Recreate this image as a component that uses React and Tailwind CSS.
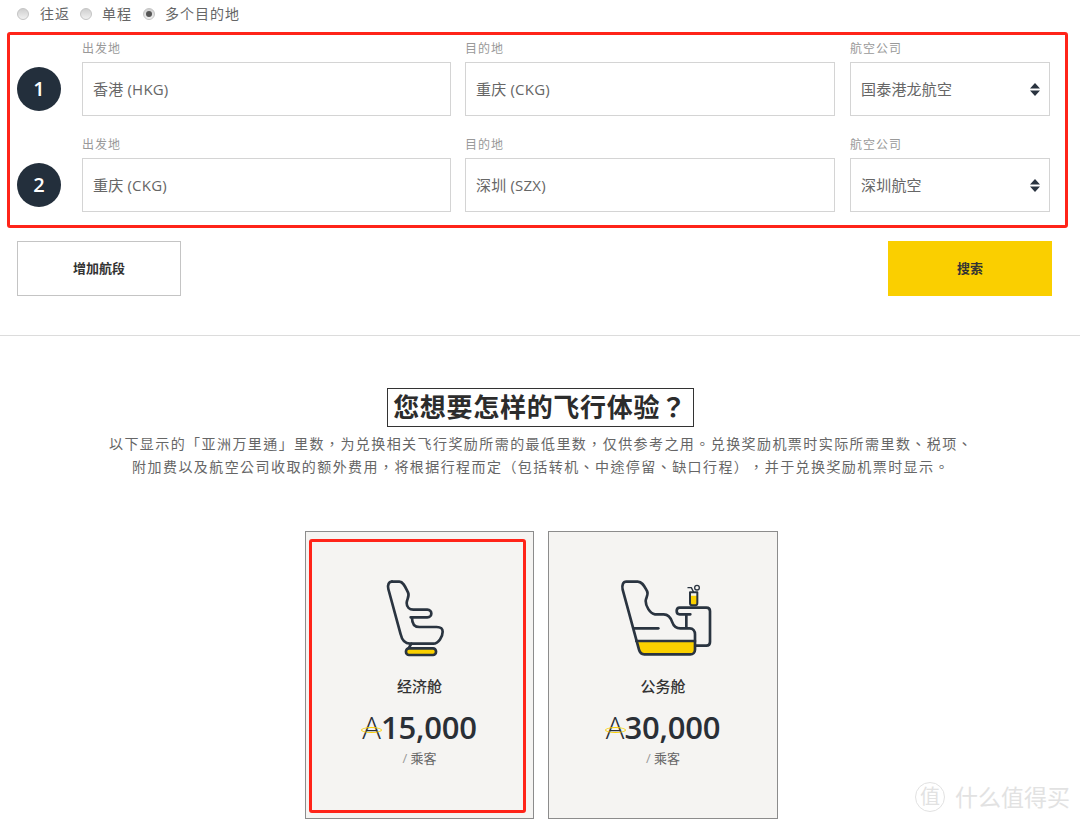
const FONT = "font-['Open_Sans','Noto_Sans_CJK_SC',sans-serif]";
const PUNCT_FONT = "font-['Open_Sans','Noto_Sans_CJK_TC',sans-serif]";

function Radio({ checked }) {
  return (
    <span className="flex h-3 w-3 items-center justify-center rounded-full border border-[#c4c4c4] bg-gradient-to-b from-[#cfcfcf] to-[#f1f1f1]">
      {checked && <span className="h-[6px] w-[6px] rounded-full bg-[#555]" />}
    </span>
  );
}

function UpDown() {
  return (
    <svg
      width="10"
      height="13"
      viewBox="0 0 10 13"
      className="pointer-events-none absolute right-[10px] top-[21px] text-[#2a3440]"
    >
      <path d="M5 0 L10 5.5 H0 Z M0 7.5 H10 L5 13 Z" fill="currentColor" />
    </svg>
  );
}

function Field({ label, value, className }) {
  return (
    <div className={className}>
      <div className="h-[22px] text-[12px] leading-[17px] tracking-[1px] text-[#999]">{label}</div>
      <input
        readOnly
        value={value}
        className="h-[54px] w-full border border-[#d4d4d4] bg-white px-[10px] pb-[2px] text-[15px] tracking-[0.2px] text-[#666] outline-none"
      />
    </div>
  );
}

function Airline({ value }) {
  return (
    <div className="w-[200px]">
      <div className="h-[22px] text-[12px] leading-[17px] tracking-[1px] text-[#999]">航空公司</div>
      <div className="relative">
        <select
          defaultValue={value}
          className="h-[54px] w-full appearance-none rounded-none border border-[#d4d4d4] bg-white px-[10px] text-[15px] tracking-[0.2px] text-[#666] outline-none"
        >
          <option>{value}</option>
        </select>
        <UpDown />
      </div>
    </div>
  );
}

function Segment({ num, from, to, airline }) {
  return (
    <div className="flex items-end">
      <div className="mb-[5px] mr-[21px] flex h-[44px] w-[44px] items-center justify-center rounded-full bg-[#232f3c] text-[20px] font-semibold text-white">
        {num}
      </div>
      <Field label="出发地" value={from} className="w-[369px]" />
      <Field label="目的地" value={to} className="ml-[14px] w-[370px]" />
      <div className="ml-[15px]">
        <Airline value={airline} />
      </div>
    </div>
  );
}

function EconomySeat() {
  return (
    <svg width="72" height="85" viewBox="0 0 216 255" className="mr-[7px]" fill="none" stroke="#2a3440" strokeWidth="8" strokeLinecap="round" strokeLinejoin="round">
      <path d="M36 20 H58 C70 20 76 36 84 52 C90 64 80 72 80 84 C80 96 88 104 100 104 H142 C158 104 158 127 142 127 H92" />
      <path d="M36 20 C26 20 22 30 25 42 L62 178 C66 196 74 206 90 206 H160 C176 206 188 184 188 170 C188 160 180 156 170 156 H118 C104 156 96 146 96 128" />
      <path d="M94 206 C90 212 88 216 86 220" />
      <rect x="78" y="220" width="90" height="20" rx="9" fill="#fad000" />
    </svg>
  );
}

function BusinessSeat() {
  return (
    <svg width="102" height="85" viewBox="0 0 306 255" className="ml-[6px]" fill="none" stroke="#2a3440" strokeWidth="8" strokeLinecap="round" strokeLinejoin="round">
      <path d="M66 198 H240 V224 C240 232 234 238 226 238 H88 C78 238 74 232 72 224 Z" fill="#fad000" stroke="none" />
      <path d="M34 20 H68 C82 20 88 34 96 48 C102 58 92 68 92 78 C92 92 104 116 120 118 H146 C162 118 168 130 172 142 C176 154 184 160 196 160 H224 C234 160 240 168 240 178 V224 C240 232 234 238 226 238 H88 C78 238 74 232 72 224 L23 44 C20 30 24 20 34 20 Z" />
      <path d="M58 160 H130" />
      <path d="M64 198 H240" />
      <path d="M226 118 H194 C182 118 182 98 194 98 H274 C281 98 285 102 285 109 V201 C285 208 281 212 274 212 H242" />
      <path d="M214 120 V158" />
      <path d="M225 62 H247 V84 C247 88 245 91 241 91 H231 C227 91 225 88 225 84 Z" fill="#fad000" stroke="none" />
      <path d="M225 52 H247 V84 C247 88 245 91 241 91 H231 C227 91 225 88 225 84 Z" strokeWidth="6" />
      <path d="M235 50 L229 38 H219" strokeWidth="4" />
      <circle cx="246" cy="38" r="7" strokeWidth="4" />
    </svg>
  );
}

function Fare({ icon, title, miles, frame, className }) {
  return (
    <div className={`relative flex h-[288px] flex-col items-center border border-[#8c8c8c] bg-[#f5f4f2] pt-[43px] ${className}`}>
      <div className="flex h-[85px] items-center justify-center">{icon}</div>
      <div className="mt-[14px] text-[15px] font-medium leading-[24px] text-[#333]">{title}</div>
      <div className="relative mt-[11px] flex items-baseline text-[#2a2f36] leading-[36px]">
        <span className="text-[31px] font-light">A</span>
        <span className="text-[31px] font-semibold tracking-[-0.2px]">{miles}</span>
        <span className="absolute left-[-1px] top-[18px] h-[6px] w-[21px] rounded-[50%] border-[1.5px] border-[#fad000]" />
      </div>
      <div className="mt-[3px] text-[13px] leading-[20px] text-[#666]">
        <span className="text-[#999]">/</span> 乘客
      </div>
      {frame && (
        <div className="absolute left-[3px] top-[7px] h-[274px] w-[217px] rounded-[3px] border-[3px] border-[#ff2419]" />
      )}
    </div>
  );
}

export default function App() {
  return (
    <div className={`relative h-[822px] w-[1080px] overflow-hidden bg-white ${FONT}`}>
      {/* trip type */}
      <div className="flex h-[40px] items-start pl-[17px] pt-[4px] text-[14px] leading-[20px] tracking-[1px] text-[#666]">
        <div className="flex items-center">
          <Radio />
          <span className="ml-[11px]">往返</span>
        </div>
        <div className="ml-[10px] flex items-center">
          <Radio />
          <span className="ml-[10px]">单程</span>
        </div>
        <div className="ml-[11px] flex items-center">
          <Radio checked />
          <span className="ml-[10px]">多个目的地</span>
        </div>
      </div>

      {/* segments */}
      <div className="relative flex flex-col gap-[20px] pl-[17px]">
        <Segment num="1" from="香港 (HKG)" to="重庆 (CKG)" airline="国泰港龙航空" />
        <Segment num="2" from="重庆 (CKG)" to="深圳 (SZX)" airline="深圳航空" />
        <div className="absolute left-[7px] top-[-8px] h-[196px] w-[1061px] rounded-[3px] border-[3px] border-[#ff2419]" />
      </div>

      <div className="mt-[29px] flex justify-between pl-[17px] pr-[28px]">
        <button className="h-[55px] w-[164px] border border-[#c4c4c4] bg-white text-[13px] font-bold text-[#333]">
          增加航段
        </button>
        <button className="h-[55px] w-[164px] bg-[#facf00] text-[13px] font-bold text-[#333]">搜索</button>
      </div>

      <div className="mt-[39px] border-t border-[#dcdcdc]" />

      {/* intro */}
      <div className="mt-[52px] flex flex-col items-center">
        <h1 className={`flex h-[39px] w-[307px] items-center justify-center border border-[#333] text-[26px] font-bold tracking-[0.7px] text-[#2c2c2c] ${PUNCT_FONT}`}>
          您想要怎样的飞行体验？
        </h1>
        <p className={`mt-[5px] pl-[2px] text-center text-[14px] leading-[23px] tracking-[1.43px] text-[#666] [text-spacing-trim:space-all] ${PUNCT_FONT}`}>
          以下显示的「亚洲万里通」里数，为兑换相关飞行奖励所需的最低里数，仅供参考之用。兑换奖励机票时实际所需里数、税项、
          <br />
          附加费以及航空公司收取的额外费用，将根据行程而定（包括转机、中途停留、缺口行程），并于兑换奖励机票时显示。
        </p>
      </div>

      {/* fares */}
      <div className="mt-[53px] flex gap-[14px] pl-[305px]">
        <Fare className="w-[229px]" icon={<EconomySeat />} title="经济舱" miles="15,000" frame />
        <Fare className="w-[230px]" icon={<BusinessSeat />} title="公务舱" miles="30,000" />
      </div>

      {/* watermark */}
      <div className="absolute bottom-[10px] right-[10px] flex items-center text-[#e2e2e2]">
        <span className="flex h-[30px] w-[30px] items-center justify-center rounded-full border border-[#e2e2e2] text-[20px]">
          值
        </span>
        <span className="ml-[10px] text-[23px] leading-[30px]">什么值得买</span>
      </div>
    </div>
  );
}
